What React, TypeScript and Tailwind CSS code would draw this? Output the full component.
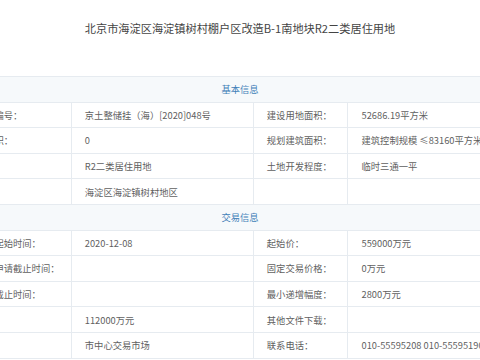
import React from "react";

type Row = [string, string, string, string];

const basic: Row[] = [
  ["宗地编号：", "京土整储挂（海）[2020]048号", "建设用地面积：", "52686.19平方米"],
  ["总面积：", "0", "规划建筑面积：", "建筑控制规模 ≤83160平方米"],
  ["用途：", "R2二类居住用地", "土地开发程度：", "临时三通一平"],
  ["位置：", "海淀区海淀镇树村地区", "", ""],
];

const trade: Row[] = [
  ["挂牌起始时间：", "2020-12-08", "起始价：", "559000万元"],
  ["竞买申请截止时间：", "", "固定交易价格：", "0万元"],
  ["挂牌截止时间：", "", "最小递增幅度：", "2800万元"],
  ["押金：", "112000万元", "其他文件下载：", ""],
  ["地点：", "市中心交易市场", "联系电话：", "010-55595208 010-55595190"],
];

function Header({ text }: { text: string }) {
  return (
    <div className="h-[25.6px] flex items-center justify-center bg-[#f6f9fb] border-b border-[#e6ebf0] text-[#3f7fb8]">
      {text}
    </div>
  );
}

function DataRow({ r }: { r: Row }) {
  return (
    <div className="h-[25.6px] flex border-b border-[#e6ebf0] text-[#5f5f5f]">
      <div className="w-[109px] shrink-0 pl-[12.8px] flex items-center whitespace-nowrap border-r border-[#e6ebf0] overflow-hidden">
        {r[0]}
      </div>
      <div className="w-[182px] shrink-0 pl-[12.8px] flex items-center whitespace-nowrap border-r border-[#e6ebf0]">
        {r[1]}
      </div>
      <div className="w-[94px] shrink-0 pl-[12.8px] flex items-center whitespace-nowrap border-r border-[#e6ebf0]">
        {r[2]}
      </div>
      <div className="w-[169px] shrink-0 pl-[13.5px] flex items-center whitespace-nowrap">
        {r[3]}
      </div>
    </div>
  );
}

export default function App() {
  return (
    <div
      className="w-[480px] h-[360px] overflow-hidden bg-white"
      style={{ fontFamily: '"Noto Sans CJK SC", "Noto Sans", sans-serif' }}
    >
      <div className="h-[76px] pt-[21px]">
        <div className="text-center text-[11.2px] leading-[14px] text-[#444]">
          北京市海淀区海淀镇树村棚户区改造B-1南地块R2二类居住用地
        </div>
      </div>
      <div className="ml-[-37px] w-[554px] border-t border-[#e6ebf0] text-[9.3px] leading-[12px]">
        <Header text="基本信息" />
        {basic.map((r, i) => (
          <DataRow key={"b" + i} r={r} />
        ))}
        <Header text="交易信息" />
        {trade.map((r, i) => (
          <DataRow key={"t" + i} r={r} />
        ))}
      </div>
    </div>
  );
}
